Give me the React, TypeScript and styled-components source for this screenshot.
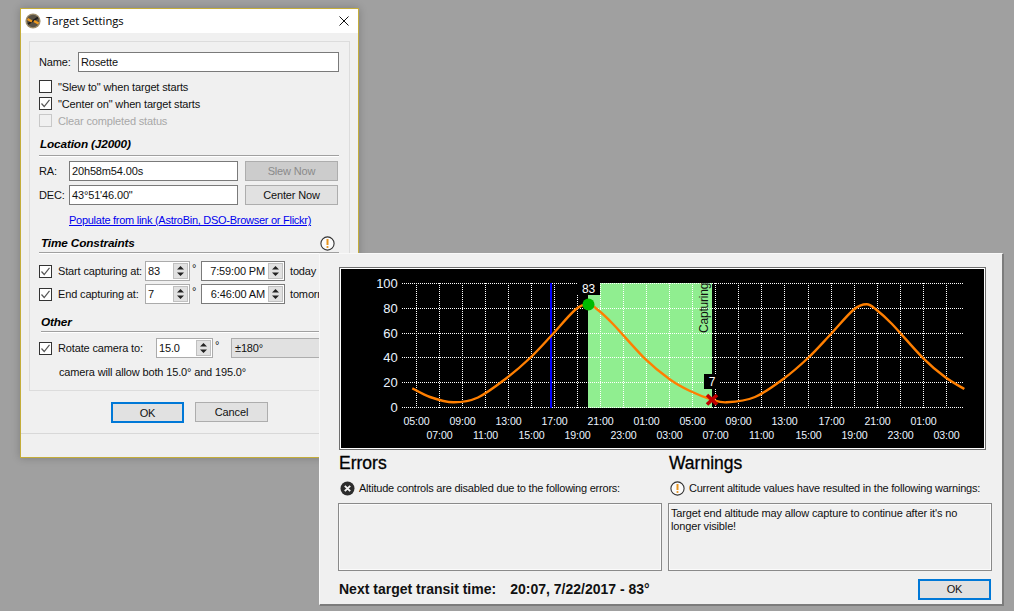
import React, { FC, ReactNode } from 'react';
import styled, { createGlobalStyle } from 'styled-components';

const GlobalStyle = createGlobalStyle`
  html, body {
    margin: 0;
    height: 100%;
    overflow: hidden;
    background: #a0a0a0;
    font-family: "Liberation Sans", Arial, sans-serif;
    font-size: 11px;
    letter-spacing: -0.15px;
    color: #111;
  }
`;

const Desktop = styled.div`
  position: relative;
  width: 1014px;
  height: 611px;
  overflow: hidden;
`;

const SettingsWindow = styled.div`
  position: absolute;
  left: 20px;
  top: 8px;
  width: 339px;
  height: 450px;
  box-sizing: border-box;
  border: 1px solid #c4ad3a;
  background: #f0f0f0;
  box-shadow: 0 0 8px rgba(0, 0, 0, 0.22);
  display: flex;
  flex-direction: column;
`;

const TitleBar = styled.div`
  height: 24px;
  flex: none;
  background: #fff;
  display: flex;
  align-items: center;
  padding: 0 9px 0 4px;
  gap: 5px;
`;

const TitleText = styled.span`
  flex: 1;
  font-family: "Open Sans", sans-serif;
  font-size: 11.2px;
  letter-spacing: 0;
  padding-bottom: 2px;
  color: #000;
`;

const Group = styled.div`
  margin: 8px 8px 0;
  height: 350px;
  box-sizing: border-box;
  border: 1px solid #dcdcdc;
  padding: 10px 10px 0 9px;
`;

const Row = styled.div<{ $top?: number; $h?: number }>`
  display: flex;
  align-items: center;
  height: ${(p) => p.$h ?? 20}px;
  margin-top: ${(p) => p.$top ?? 0}px;
`;

const Label = styled.span<{ $w?: number; $muted?: boolean }>`
  flex: none;
  width: ${(p) => (p.$w ? `${p.$w}px` : 'auto')};
  white-space: nowrap;
  color: ${(p) => (p.$muted ? '#a8a8a8' : '#111')};
`;

const TextInput = styled.div<{ $w: number }>`
  flex: none;
  width: ${(p) => p.$w}px;
  height: 20px;
  box-sizing: border-box;
  border: 1px solid #7a7a7a;
  background: #fff;
  display: flex;
  align-items: center;
  padding-left: 2px;
  white-space: nowrap;
`;

const Box = styled.span<{ $disabled?: boolean }>`
  flex: none;
  width: 13px;
  height: 13px;
  box-sizing: border-box;
  border: 1px solid ${(p) => (p.$disabled ? '#c8c8c8' : '#333')};
  background: ${(p) => (p.$disabled ? '#f0f0f0' : '#fff')};
  margin-right: 6px;
  display: flex;
  align-items: center;
  justify-content: center;
`;

const Check: FC<{ on?: boolean; disabled?: boolean }> = ({ on, disabled }) => (
  <Box $disabled={disabled}>
    {on && (
      <svg width="11" height="11" viewBox="0 0 11 11">
        <path d="M1.5 5.5 L4.2 8.5 L9.5 1.8" fill="none" stroke="#555" strokeWidth="1.2" />
      </svg>
    )}
  </Box>
);

const SectionTitle = styled.div<{ $top: number; $indent?: number }>`
  margin: ${(p) => p.$top}px 0 0 ${(p) => p.$indent ?? 1}px;
  font-size: 11.8px;
  font-weight: bold;
  font-style: italic;
  line-height: 14px;
  height: 14px;
  color: #000;
`;

const Rule = styled.div<{ $left?: number; $mt?: number }>`
  height: 1px;
  margin: ${(p) => p.$mt ?? 4}px 0 0 ${(p) => p.$left ?? 0}px;
  background: #a0a0a0;
  border-bottom: 1px solid #fff;
`;

const FormButton = styled.div<{ $w?: number; $disabled?: boolean; $primary?: boolean }>`
  flex: none;
  width: ${(p) => p.$w ?? 73}px;
  height: ${(p) => (p.$primary ? 21 : 20)}px;
  box-sizing: border-box;
  border: ${(p) => (p.$primary ? '2px solid #0078d7' : '1px solid #adadad')};
  background: ${(p) => (p.$disabled ? '#cccccc' : '#e1e1e1')};
  color: ${(p) => (p.$disabled ? '#8a8a8a' : '#111')};
  display: flex;
  align-items: center;
  justify-content: center;
`;

const Link = styled.a`
  margin-left: 30px;
  color: #0000ee;
  text-decoration: underline;
  white-space: nowrap;
  letter-spacing: -0.27px;
`;

const SpinBox = styled.div<{ $w: number; $strong?: boolean; $right?: boolean }>`
  flex: none;
  width: ${(p) => p.$w}px;
  height: 20px;
  box-sizing: border-box;
  border: 1px solid ${(p) => (p.$strong ? '#7a7a7a' : '#ababab')};
  background: #fff;
  display: flex;
  align-items: center;
  justify-content: space-between;
  padding: 0 1px 0 2px;
  span {
    flex: 1;
    text-align: ${(p) => (p.$right ? 'right' : 'left')};
    padding-right: ${(p) => (p.$right ? 3 : 0)}px;
    white-space: nowrap;
  }
`;

const Stepper = styled.div`
  flex: none;
  width: 15px;
  height: 16px;
  background: #e1e1e1;
  border: 1px solid #c0c0c0;
  box-sizing: border-box;
  display: flex;
  align-items: center;
  justify-content: center;
`;

const Spin: FC<{ w: number; value: string; strong?: boolean; right?: boolean }> = ({ w, value, strong, right }) => (
  <SpinBox $w={w} $strong={strong} $right={right}>
    <span>{value}</span>
    <Stepper>
      <svg width="9" height="12" viewBox="0 0 9 12">
        <path d="M4.5 1 L8 4.5 H1 Z M1 7.5 H8 L4.5 11 Z" fill="#222" />
      </svg>
    </Stepper>
  </SpinBox>
);

const Degree = styled.span<{ $w: number }>`
  flex: none;
  width: ${(p) => p.$w}px;
  padding-left: 2px;
  box-sizing: border-box;
  align-self: flex-start;
  line-height: 14px;
`;

const GreyCombo = styled.div`
  flex: none;
  width: 95px;
  height: 20px;
  box-sizing: border-box;
  border: 1px solid #adadad;
  background: #e1e1e1;
  padding-left: 3px;
  display: flex;
  align-items: center;
`;

const WarnSpot = styled.span`
  position: absolute;
  right: 4px;
  top: 0;
`;

const TitleRow = styled.div`
  position: relative;
`;

const Footer = styled.div`
  display: flex;
  justify-content: flex-start;
  gap: 11px;
  padding-left: 90px;
  margin-top: 11px;
  height: 31px;
  border-bottom: 1px solid #d8d8d8;
`;

const AltitudeWindow = styled.div`
  position: absolute;
  left: 319px;
  top: 253px;
  width: 685px;
  height: 353px;
  box-sizing: border-box;
  background: #f0f0f0;
  border: 1px solid #f8f8f8;
  border-right: 2px solid #7c7c7c;
  border-bottom: 2px solid #7c7c7c;
  padding: 13px 11px 0 19px;
`;

const ChartFrame = styled.div`
  width: 647px;
  height: 183px;
  box-sizing: border-box;
  border: 1px solid #6e6e6e;
  background: #fff;
  svg {
    display: block;
  }
`;

const Columns = styled.div`
  display: grid;
  grid-template-columns: 324px 324px;
  column-gap: 6px;
  margin-left: -1px;
`;

const Column = styled.div`
  display: flex;
  flex-direction: column;
`;

const Heading = styled.div`
  font-size: 17.5px;
  font-weight: 500;
  letter-spacing: 0;
  height: 27px;
  line-height: 26px;
  padding-left: 1px;
  margin-bottom: 1px;
  color: #000;
  -webkit-text-stroke: 0.3px #000;
`;

const Notice = styled.div`
  display: flex;
  align-items: center;
  gap: 4px;
  height: 20px;
  padding-left: 2px;
  white-space: nowrap;
  letter-spacing: -0.22px;
  svg {
    flex: none;
  }
`;

const MessageBox = styled.div`
  margin-top: 5px;
  height: 68px;
  box-sizing: border-box;
  border: 1px solid #8a8a8a;
  box-shadow: inset 0 0 0 1px #fbfbfb;
  padding: 3px 2px;
  line-height: 13px;
`;

const BottomBar = styled.div`
  display: flex;
  align-items: center;
  justify-content: space-between;
  margin-top: 7px;
  height: 22px;
`;

const TransitText = styled.div`
  font-size: 14px;
  font-weight: bold;
  letter-spacing: 0;
  white-space: nowrap;
  display: flex;
  gap: 14px;
  color: #111;
`;

const AppIcon = () => (
  <svg width="16" height="16" viewBox="0 0 16 16">
    <circle cx="8" cy="8" r="7.6" fill="#a08f6c" />
    <circle cx="8" cy="8" r="6.2" fill="#5a5244" />
    <path d="M3 11 L13 4.5" stroke="#1c1c1c" strokeWidth="1.8" />
    <path d="M2.5 6 L7 8.5 M9 8 L13.5 10.5" stroke="#f09a1e" strokeWidth="2.4" />
  </svg>
);

const CloseIcon = () => (
  <svg width="10" height="10" viewBox="0 0 10 10">
    <path d="M0.5 0.5 L9.5 9.5 M9.5 0.5 L0.5 9.5" stroke="#111" strokeWidth="1" />
  </svg>
);

const WarnIcon = () => (
  <svg width="15" height="15" viewBox="0 0 15 15">
    <circle cx="7.5" cy="7.5" r="6.6" fill="#fbfbfb" stroke="#333" strokeWidth="1.1" />
    <path d="M7.5 3 V9" stroke="#e8941e" strokeWidth="2" />
    <circle cx="7.5" cy="11" r="1.1" fill="#e8941e" />
  </svg>
);

const ErrorIcon = () => (
  <svg width="15" height="15" viewBox="0 0 15 15">
    <circle cx="7.5" cy="7.5" r="7" fill="#2c2c2c" />
    <path d="M4.8 4.8 L10.2 10.2 M10.2 4.8 L4.8 10.2" stroke="#f4f4f4" strokeWidth="1.9" />
  </svg>
);

const CURVE: [number, number][] = [
  [412.3, 388.3], [430, 397], [453.3, 402.3], [478, 397.5], [506.7, 378], [530, 358], [551, 336],
  [575, 310], [588, 304.3], [598, 310], [613, 324], [644.6, 358.3], [670, 379.5], [690, 391],
  [711.7, 399.5], [726.7, 402.3], [755, 397], [783.3, 379], [808, 358], [830, 335], [853.3, 310],
  [866.7, 304.3], [876.7, 310], [892, 324], [923.3, 358.3], [945, 377], [964.3, 389],
];

// catmull-rom through the measured points
const curvePath = (pts: [number, number][]) => {
  let d = `M${pts[0][0]} ${pts[0][1]}`;
  for (let i = 0; i < pts.length - 1; i++) {
    const p0 = pts[Math.max(i - 1, 0)];
    const p1 = pts[i];
    const p2 = pts[i + 1];
    const p3 = pts[Math.min(i + 2, pts.length - 1)];
    const c1x = p1[0] + (p2[0] - p0[0]) / 6;
    const c1y = p1[1] + (p2[1] - p0[1]) / 6;
    const c2x = p2[0] - (p3[0] - p1[0]) / 6;
    const c2y = p2[1] - (p3[1] - p1[1]) / 6;
    d += ` C${c1x} ${c1y} ${c2x} ${c2y} ${p2[0]} ${p2[1]}`;
  }
  return d;
};

const H_LINES = [
  { y: 283.5, label: '100' },
  { y: 308.5, label: '80' },
  { y: 333.5, label: '60' },
  { y: 357.5, label: '40' },
  { y: 382.5, label: '20' },
  { y: 407.5, label: '0' },
];

const TICKS = Array.from({ length: 24 }, (_, i) => ({
  x: Math.round(416 + i * 23.03) + 0.5,
  label: `${String((5 + i * 2) % 24).padStart(2, '0')}:00`,
  row: i % 2,
}));

const AltitudeChart = () => (
  <svg width="645" height="181" viewBox="340 268 645 181" fontFamily="Liberation Sans, Arial, sans-serif">
    <rect x="341" y="269" width="643" height="179" fill="#000" />
    <rect x="588" y="283" width="124" height="125" fill="#90ee90" />
    {H_LINES.map((l) => (
      <line key={l.y} x1="402" x2="964" y1={l.y} y2={l.y} stroke="#fff" strokeDasharray="1 1" />
    ))}
    {TICKS.map((t) => (
      <line key={t.x} x1={t.x} x2={t.x} y1="283" y2="408" stroke="#fff" strokeDasharray="1 1" />
    ))}
    <line x1="551" x2="551" y1="283" y2="408" stroke="#0000ff" strokeWidth="2" />
    <path d={curvePath(CURVE)} fill="none" stroke="#ff7f00" strokeWidth="2.4" />
    <rect x="577" y="283" width="23" height="12" fill="#000" />
    <text x="588.5" y="293" fontSize="12" fill="#fff" textAnchor="middle">83</text>
    <rect x="704" y="374" width="16" height="15" fill="#000" />
    <text x="712" y="386" fontSize="12" fill="#fff" textAnchor="middle">7</text>
    <circle cx="588.5" cy="304.5" r="6" fill="#00bb00" />
    <path d="M707 395 L717 404.5 M717 395 L707 404.5" stroke="#c00000" strokeWidth="3.6" />
    <text transform="translate(708 333) rotate(-90)" fontSize="12" fill="#111" letterSpacing="-0.2">Capturing</text>
    {H_LINES.map((l) => (
      <text key={l.label} x="397.5" y={l.y + 4} fontSize="13" fill="#eaf4ff" textAnchor="end">{l.label}</text>
    ))}
    {TICKS.map((t) => (
      <text key={t.label + t.x} x={t.x} y={t.row ? 439 : 425} fontSize="10.6" fill="#eaf4ff" textAnchor="middle">{t.label}</text>
    ))}
  </svg>
);

const Section: FC<{ heading: string; icon: ReactNode; notice: string; children?: ReactNode }> = ({ heading, icon, notice, children }) => (
  <Column>
    <Heading>{heading}</Heading>
    <Notice>{icon}<span>{notice}</span></Notice>
    <MessageBox>{children}</MessageBox>
  </Column>
);

const App: FC = () => (
  <Desktop>
    <GlobalStyle />
    <SettingsWindow>
      <TitleBar>
        <AppIcon />
        <TitleText>Target Settings</TitleText>
        <CloseIcon />
      </TitleBar>
      <Group>
        <Row>
          <Label $w={39}>Name:</Label>
          <TextInput $w={261}>Rosette</TextInput>
        </Row>
        <Row $top={6} $h={17}><Check /><Label>"Slew to" when target starts</Label></Row>
        <Row $h={17}><Check on /><Label>"Center on" when target starts</Label></Row>
        <Row $h={17}><Check disabled /><Label $muted>Clear completed status</Label></Row>
        <SectionTitle $top={8}>Location (J2000)</SectionTitle>
        <Rule />
        <Row $top={4}>
          <Label $w={30}>RA:</Label>
          <TextInput $w={169}>20h58m54.00s</TextInput>
          <Label $w={7} />
          <FormButton $w={93} $disabled>Slew Now</FormButton>
        </Row>
        <Row $top={4}>
          <Label $w={30}>DEC:</Label>
          <TextInput $w={169}>43°51'46.00"</TextInput>
          <Label $w={7} />
          <FormButton $w={93}>Center Now</FormButton>
        </Row>
        <Row $top={7} $h={16}><Link>Populate from link (AstroBin, DSO-Browser or Flickr)</Link></Row>
        <TitleRow>
          <SectionTitle $top={8} $indent={2}>Time Constraints</SectionTitle>
          <WarnSpot><WarnIcon /></WarnSpot>
        </TitleRow>
        <Rule $mt={2} />
        <Row $top={7}>
          <Check on />
          <Label $w={87}>Start capturing at:</Label>
          <Spin w={45} value="83" />
          <Degree $w={11}>°</Degree>
          <Spin w={84} value="7:59:00 PM" strong right />
          <Label $w={5} />
          <Label>today</Label>
        </Row>
        <Row $top={3}>
          <Check on />
          <Label $w={87}>End capturing at:</Label>
          <Spin w={45} value="7" />
          <Degree $w={11}>°</Degree>
          <Spin w={84} value="6:46:00 AM" strong right />
          <Label $w={5} />
          <Label>tomorrow</Label>
        </Row>
        <SectionTitle $top={11} $indent={2}>Other</SectionTitle>
        <Rule $left={2} $mt={2} />
        <Row $top={5}>
          <Check on />
          <Label $w={98}>Rotate camera to:</Label>
          <Spin w={57} value="15.0" />
          <Degree $w={18}>°</Degree>
          <GreyCombo>±180°</GreyCombo>
        </Row>
        <Row $top={4}><Label $w={20} /><Label>camera will allow both 15.0° and 195.0°</Label></Row>
      </Group>
      <Footer>
        <FormButton $primary>OK</FormButton>
        <FormButton>Cancel</FormButton>
      </Footer>
    </SettingsWindow>
    <AltitudeWindow>
      <ChartFrame><AltitudeChart /></ChartFrame>
      <Columns>
        <Section heading="Errors" icon={<ErrorIcon />} notice="Altitude controls are disabled due to the following errors:" />
        <Section heading="Warnings" icon={<WarnIcon />} notice="Current altitude values have resulted in the following warnings:">
          Target end altitude may allow capture to continue after it's no longer visible!
        </Section>
      </Columns>
      <BottomBar>
        <TransitText><span>Next target transit time:</span><span>20:07, 7/22/2017 - 83°</span></TransitText>
        <FormButton $primary>OK</FormButton>
      </BottomBar>
    </AltitudeWindow>
  </Desktop>
);

export default App;
